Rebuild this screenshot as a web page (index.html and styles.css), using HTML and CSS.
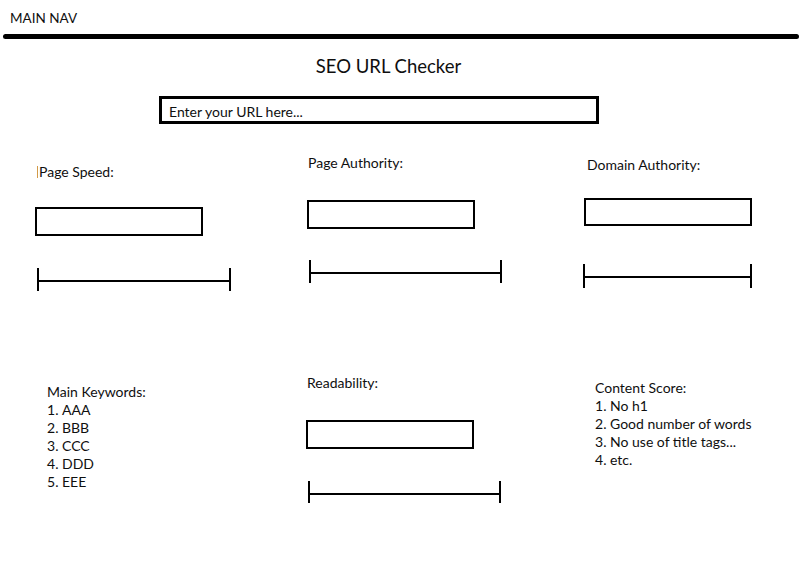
FILE: index.html
```html
<!DOCTYPE html>
<html lang="en">
<head>
<meta charset="utf-8">
<title>SEO URL Checker</title>
<link rel="stylesheet" href="styles.css">
</head>
<body>
<header class="nav">MAIN NAV</header>
<div class="rule"></div>
<h1 class="title">SEO URL Checker</h1>
<div class="url">Enter your URL here...</div>

<section class="row row-top">
  <div class="col col-speed">
    <div class="label"><span class="caret"></span>Page Speed:</div>
    <div class="box"></div>
    <div class="bar"></div>
  </div>
  <div class="col col-pa">
    <div class="label">Page Authority:</div>
    <div class="box"></div>
    <div class="bar"></div>
  </div>
  <div class="col col-da">
    <div class="label">Domain Authority:</div>
    <div class="box"></div>
    <div class="bar"></div>
  </div>
</section>

<section class="row row-bottom">
  <div class="col col-kw">
    <div class="label">Main Keywords:</div>
    <ol class="list">
      <li>AAA</li>
      <li>BBB</li>
      <li>CCC</li>
      <li>DDD</li>
      <li>EEE</li>
    </ol>
  </div>
  <div class="col col-read">
    <div class="label">Readability:</div>
    <div class="box"></div>
    <div class="bar"></div>
  </div>
  <div class="col col-content">
    <div class="label">Content Score:</div>
    <ol class="list">
      <li>No h1</li>
      <li>Good number of words</li>
      <li>No use of title tags...</li>
      <li>etc.</li>
    </ol>
  </div>
</section>
</body>
</html>
```
FILE: styles.css
```css
* { box-sizing: border-box; }

body {
  margin: 0;
  width: 799px;
  background: #fff;
  color: #0f0f0f;
  font-family: Lato, "Open Sans", sans-serif;
  font-size: 14px;
  line-height: 18px;
}

.nav {
  height: 34px;
  padding: 10px 0 0 10px;
  font-size: 13.5px;
  line-height: 16px;
}

.rule {
  margin-left: 3px;
  height: 5px;
  background: #000;
  border-radius: 3px;
}

.title {
  margin: 15px 0 0;
  padding-right: 22px;
  text-align: center;
  font-size: 18.5px;
  font-weight: normal;
  line-height: 24px;
}

.url {
  margin: 18px 0 0 159px;
  width: 440px;
  height: 28px;
  border: 3px solid #000;
  padding: 2px 0 0 7px;
  line-height: 22px;
}

.row {
  display: grid;
  grid-template-columns: 272px 277px 1fr;
  padding-left: 35px;
  align-items: start;
}

.box {
  width: 168px;
  height: 29px;
  border: 2px solid #000;
}

.bar {
  position: relative;
  height: 23px;
  border-left: 2px solid #000;
  border-right: 2px solid #000;
}

.bar::after {
  content: "";
  position: absolute;
  left: 0;
  right: 0;
  top: 12px;
  height: 2px;
  background: #000;
}

.caret {
  display: inline-block;
  width: 1px;
  height: 12px;
  margin-right: 1px;
  vertical-align: -1px;
  background: #d29a48;
}

.list {
  margin: 0;
  padding: 0;
  list-style: decimal inside;
}

.list li::marker { content: counter(list-item) ". "; }

/* top row */
.col-speed { padding-top: 39px; }
.col-speed .label { margin-left: 2px; }
.col-speed .box { margin-top: 26px; }
.col-speed .bar { margin: 32px 0 0 2px; width: 194px; }

.col-pa { padding-top: 30px; }
.col-pa .label { margin-left: 1px; }
.col-pa .box { margin-top: 28px; height: 29px; }
.col-pa .bar { margin: 31px 0 0 2px; width: 193px; }

.col-da { padding-top: 32px; }
.col-da .label { margin-left: 3px; }
.col-da .box { margin-top: 24px; height: 28px; }
.col-da .bar { margin: 38px 0 0 -1px; width: 169px; height: 24px; }

/* bottom row */
.col-kw { padding: 92px 0 0 12px; }

.col-read { padding-top: 83px; }
.col-read .box { margin-top: 28px; width: 168px; height: 29px; margin-left: -1px; }
.col-read .bar { margin: 32px 0 0 1px; width: 193px; height: 22px; }

.col-content { padding: 88px 0 0 11px; }
```
